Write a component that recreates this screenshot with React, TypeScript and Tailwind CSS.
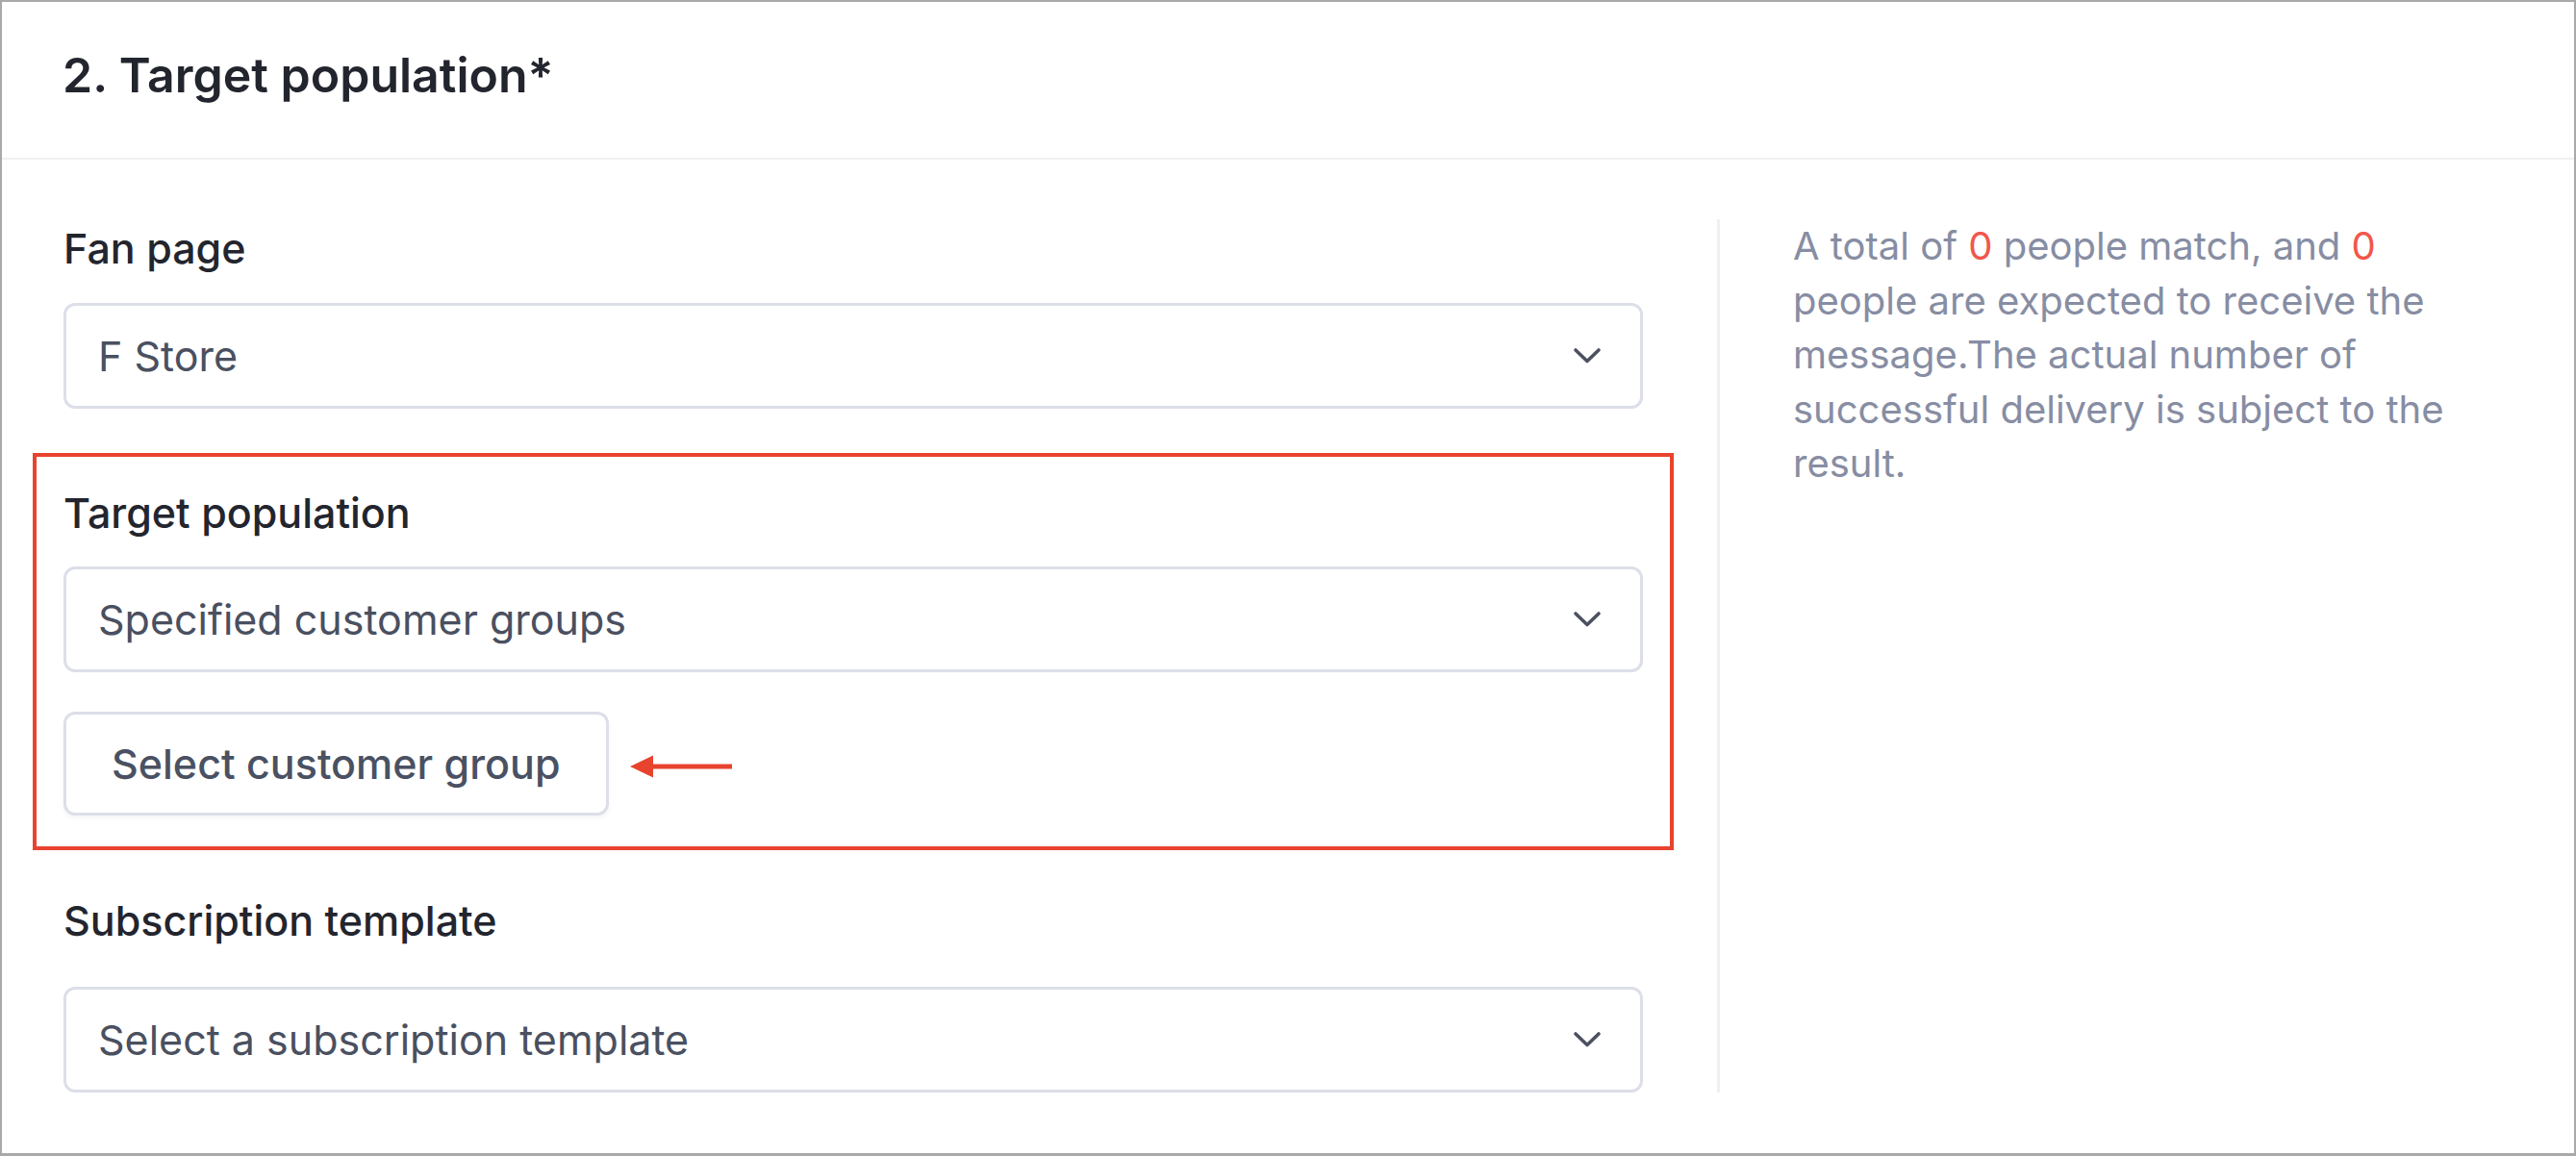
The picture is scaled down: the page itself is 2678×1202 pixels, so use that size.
import React from "react";

function Chevron() {
  return (
    <svg width="30" height="18" viewBox="0 0 30 18" fill="none" className="shrink-0">
      <path d="M3 3 L15 14.5 L27 3" stroke="#4b5160" strokeWidth="3.6" strokeLinecap="round" strokeLinejoin="round" />
    </svg>
  );
}

function Select({ value }: { value: string }) {
  return (
    <div className="flex h-[110px] w-full items-center justify-between rounded-[12px] border-[3px] border-[#dcdfe8] bg-white pl-[33px] pr-[40px]">
      <span className="text-[43px] leading-none text-[#4a5060]">{value}</span>
      <Chevron />
    </div>
  );
}

function Label({ children }: { children: React.ReactNode }) {
  return <div className="h-[60px] text-[43px] font-medium leading-[60px] text-[#23252e]">{children}</div>;
}

export default function App() {
  return (
    <div className="box-border h-[1202px] w-[2678px] overflow-hidden border-2 border-b-[3px] border-[#a9a9a9] bg-white font-['Inter',sans-serif]">
      <div className="flex h-[164px] items-center border-b-2 border-[#f0f0f0] pb-[10px] pl-[63px]">
        <h1 className="text-[50px] font-semibold leading-none text-[#23252e]">2. Target population*</h1>
      </div>
      <div className="flex pt-[62px]">
        <div className="ml-[64px] flex w-[1642px] flex-col">
          <Label>Fan page</Label>
          <div className="mt-[27px]">
            <Select value="F Store" />
          </div>
          <div className="-mx-[32px] mt-[46px] border-4 border-[#e8432e] px-[28px] pb-[32px] pt-[28px]">
            <Label>Target population</Label>
            <div className="mt-[26px]">
              <Select value="Specified customer groups" />
            </div>
            <div className="mt-[41px] flex items-center gap-[22px]">
              <button className="flex h-[108px] w-[567px] items-center rounded-[12px] border-[3px] border-[#dcdfe8] bg-white pl-[47px] text-[43px] font-medium text-[#4a5162] shadow-[0_3px_4px_rgba(0,0,0,0.04)]">
                Select customer group
              </button>
              <svg width="108" height="26" viewBox="0 0 108 26" className="mt-[6px]">
                <line x1="20" y1="13" x2="106" y2="13" stroke="#e8432e" strokeWidth="5" />
                <polygon points="0,13 24,1.5 24,24.5" fill="#e8432e" />
              </svg>
            </div>
          </div>
          <div className="mt-[43px]">
            <Label>Subscription template</Label>
          </div>
          <div className="mt-[39px]">
            <Select value="Select a subscription template" />
          </div>
        </div>
        <div className="ml-[77px] w-[3px] self-stretch bg-[#eef0f5]" />
        <div className="ml-[76px] text-[40px] leading-[56.5px] text-[#878da3]">
          <div className="whitespace-nowrap">
            A total of <span className="text-[#f2564b]">0</span> people match, and <span className="text-[#f2564b]">0</span>
          </div>
          <div className="whitespace-nowrap">people are expected to receive the</div>
          <div className="whitespace-nowrap">message.The actual number of</div>
          <div className="whitespace-nowrap">successful delivery is subject to the</div>
          <div className="whitespace-nowrap">result.</div>
        </div>
      </div>
    </div>
  );
}
